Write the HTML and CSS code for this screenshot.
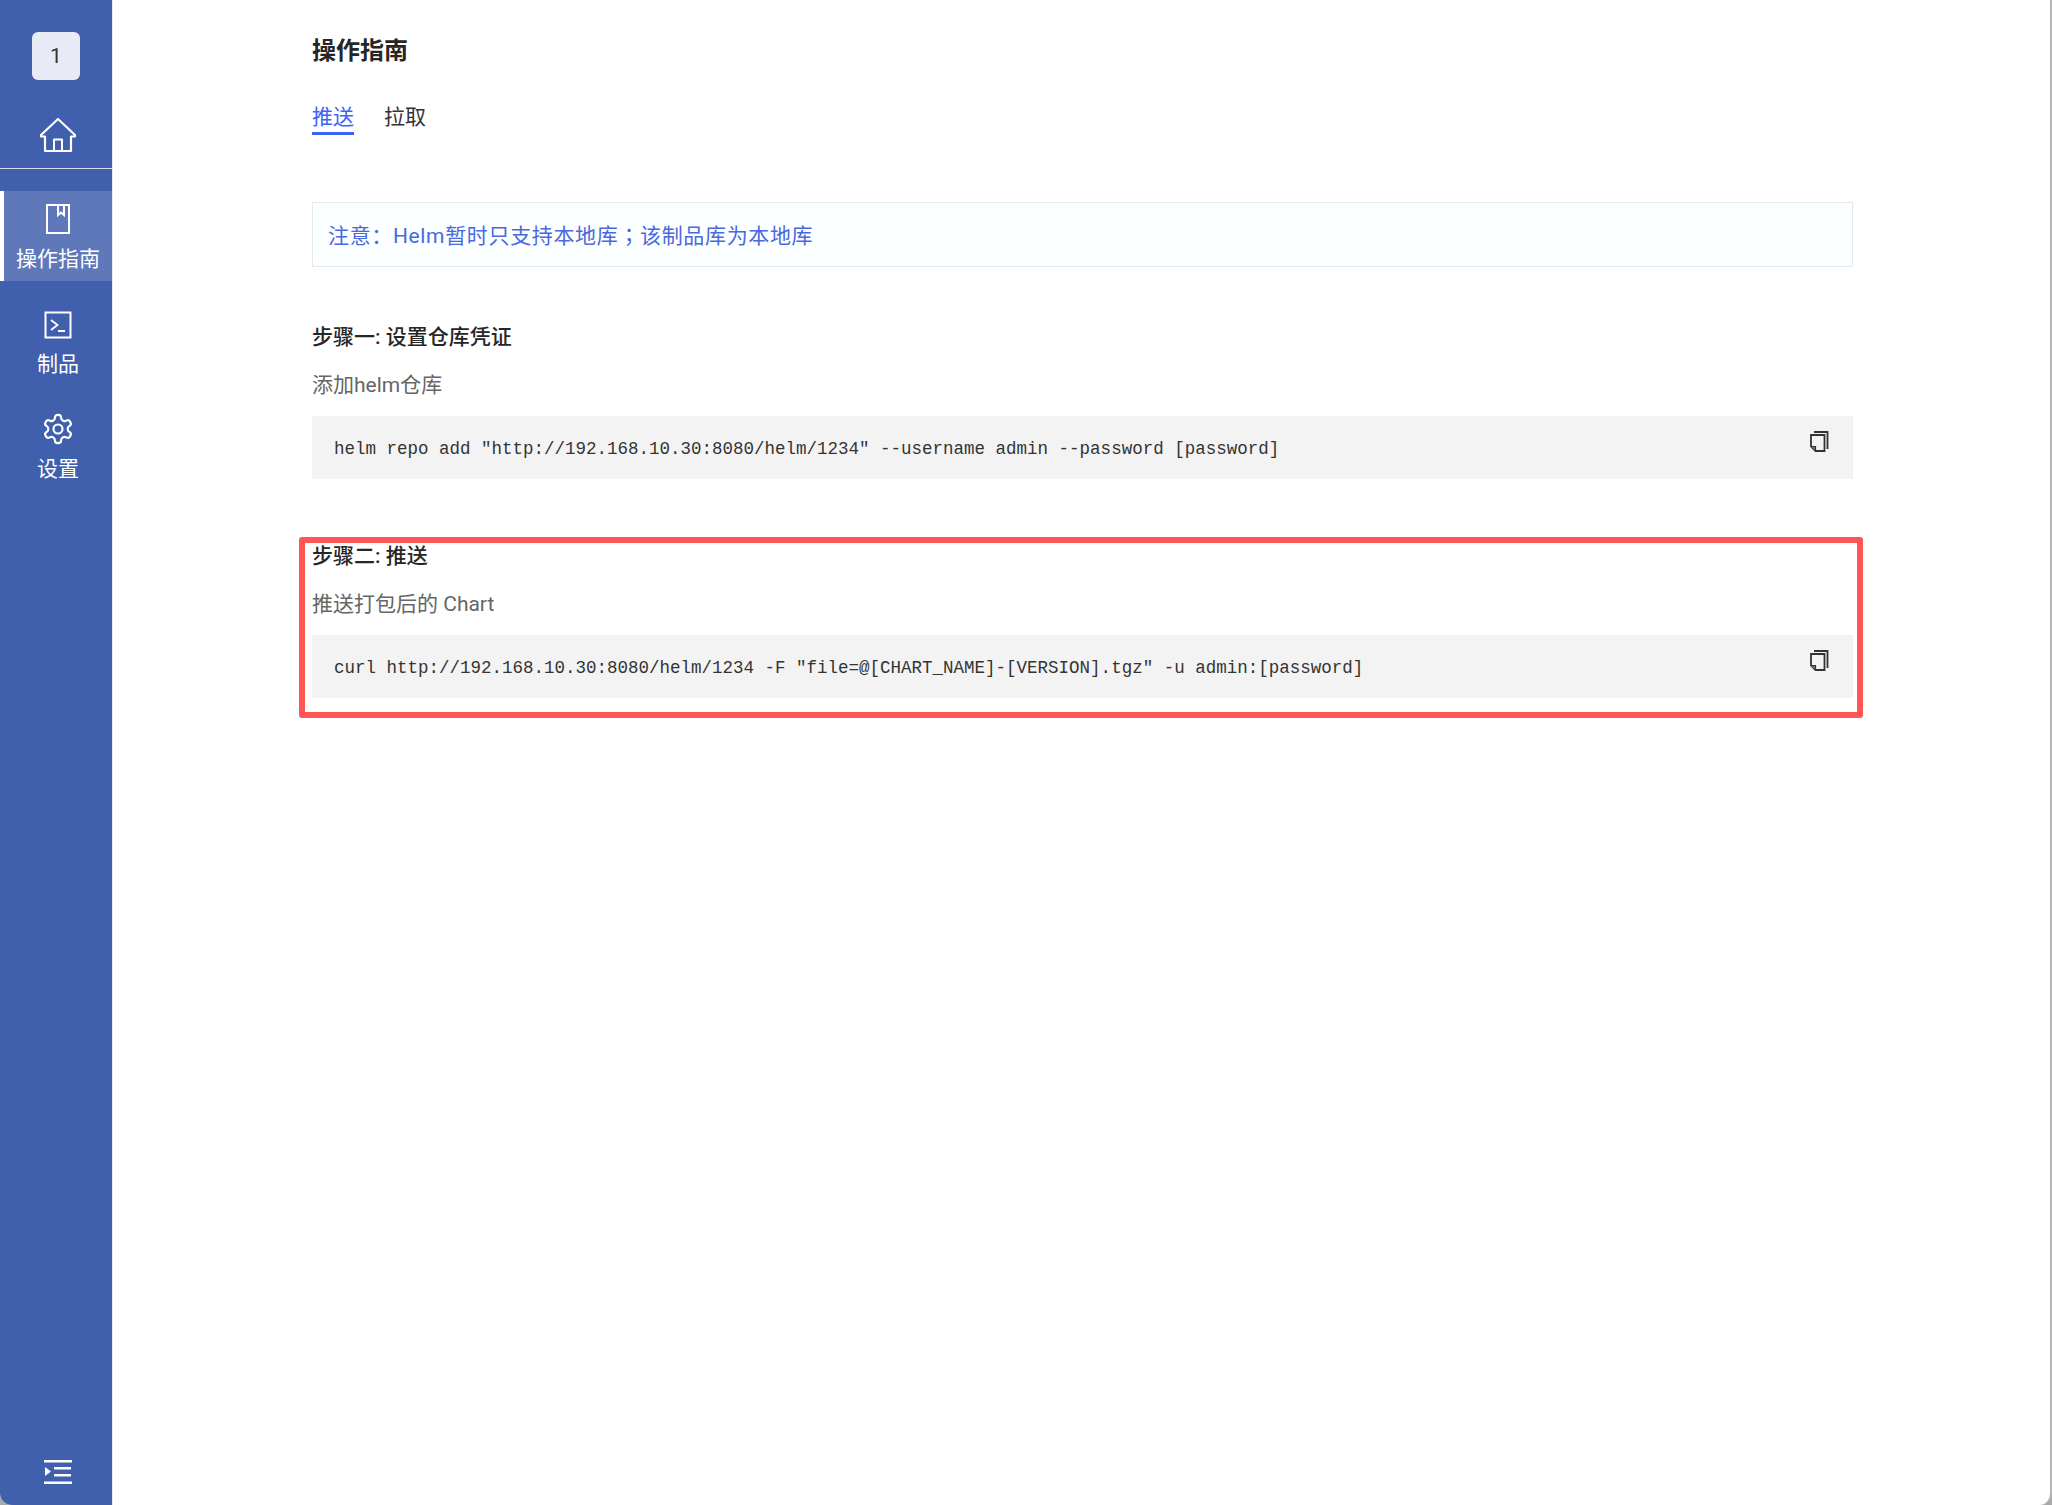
FILE: index.html
```html
<!DOCTYPE html>
<html lang="zh-CN">
<head>
<meta charset="utf-8">
<title>操作指南</title>
<link rel="stylesheet" href="styles.css">
</head>
<body>
<div class="app">
  <aside class="sidebar">
    <div class="logo">1</div>
    <a class="home">
      <svg width="38" height="36" viewBox="0 0 38 36" fill="none" stroke="#fff" stroke-width="2.2" stroke-linejoin="round"><path d="M19 2 2 18v1.5h4V34h26V19.5h4V18Z"/><path d="M15 34V22.5h8V34" stroke-width="2"/></svg>
    </a>
    <div class="divider"></div>
    <nav class="nav">
      <a class="nav-item active">
        <span class="nav-icon"><svg width="26" height="32" viewBox="0 0 26 32" fill="none" stroke="#fff" stroke-width="2"><path d="M2 2h22v28H2Z"/><path d="M13 2v10l3-2.500 3 2.500V2"/></svg></span>
        <span class="nav-label">操作指南</span>
      </a>
      <a class="nav-item">
        <span class="nav-icon nav-icon-low"><svg width="28" height="28" viewBox="0 0 28 28" fill="none" stroke="#fff" stroke-width="2"><path d="M1.500 1.500h25v25h-25Z"/><path d="m7 9 6.500 5L7 19M14 20h7" stroke-width="1.800"/></svg></span>
        <span class="nav-label">制品</span>
      </a>
      <a class="nav-item">
        <span class="nav-icon"><svg width="34" height="34" viewBox="0 0 24 24" fill="none" stroke="#fff" stroke-width="1.500"><path d="M12.220 2h-.44a2 2 0 0 0-2 2v.18a2 2 0 0 1-1 1.730l-.43.25a2 2 0 0 1-2 0l-.15-.08a2 2 0 0 0-2.730.73l-.22.38a2 2 0 0 0 .73 2.730l.15.1a2 2 0 0 1 1 1.720v.51a2 2 0 0 1-1 1.740l-.15.09a2 2 0 0 0-.73 2.730l.22.38a2 2 0 0 0 2.730.73l.15-.08a2 2 0 0 1 2 0l.43.25a2 2 0 0 1 1 1.730V20a2 2 0 0 0 2 2h.44a2 2 0 0 0 2-2v-.18a2 2 0 0 1 1-1.730l.43-.25a2 2 0 0 1 2 0l.15.08a2 2 0 0 0 2.730-.73l.22-.39a2 2 0 0 0-.73-2.730l-.15-.08a2 2 0 0 1-1-1.740v-.5a2 2 0 0 1 1-1.740l.15-.09a2 2 0 0 0 .73-2.730l-.22-.38a2 2 0 0 0-2.730-.73l-.15.08a2 2 0 0 1-2 0l-.43-.25a2 2 0 0 1-1-1.730V4a2 2 0 0 0-2-2z"/><circle cx="12" cy="12" r="3.200"/></svg></span>
        <span class="nav-label">设置</span>
      </a>
    </nav>
    <a class="collapse">
      <svg width="28" height="24" viewBox="0 0 28 24" fill="#fff"><path d="M0 0h28v2.500H0ZM10 7h17v2.500H10ZM10 14h17v2.500H10ZM0 21.500h28V24H0ZM1 7l6 4.500L1 16Z"/></svg>
    </a>
  </aside>

  <main class="main">
    <h1 class="title">操作指南</h1>
    <div class="tabs">
      <a class="tab active">推送</a>
      <a class="tab">拉取</a>
    </div>
    <div class="alert"><span>注意：Helm暂时只支持本地库<span class="punct" lang="zh-TW">；</span>该制品库为本地库</span></div>

    <section class="step">
      <h2 class="step-title">步骤一: 设置仓库凭证</h2>
      <p class="step-desc">添加helm仓库</p>
      <div class="code">
        <code class="code-text">helm repo add "http://192.168.10.30:8080/helm/1234" --username admin --password [password]</code>
        <svg class="copy" width="20" height="21" viewBox="0 0 20 21" fill="none" stroke="#333" stroke-width="1.800"><path d="M4 1h13.500v17"/><path d="M1 4h13.500v16H5.500L1 15.500Z"/><path d="M1 15.500h4.500V20" fill="#777" stroke-width="1.200"/></svg>
      </div>
    </section>

    <section class="step">
      <h2 class="step-title">步骤二: 推送</h2>
      <p class="step-desc">推送打包后的 Chart</p>
      <div class="code">
        <code class="code-text">curl http://192.168.10.30:8080/helm/1234 -F "file=@[CHART_NAME]-[VERSION].tgz" -u admin:[password]</code>
        <svg class="copy" width="20" height="21" viewBox="0 0 20 21" fill="none" stroke="#333" stroke-width="1.800"><path d="M4 1h13.500v17"/><path d="M1 4h13.500v16H5.500L1 15.500Z"/><path d="M1 15.500h4.500V20" fill="#777" stroke-width="1.200"/></svg>
      </div>
      <div class="highlight"></div>
    </section>
  </main>
</div>
</body>
</html>
```
FILE: styles.css
```css
* { box-sizing: border-box; }

html, body {
  margin: 0;
  height: 100%;
  background: #a9a9a9;
}

body {
  font-family: Roboto, "Noto Sans CJK SC", "Noto Sans", sans-serif;
  font-size: 21px;
  overflow: hidden;
}

.app {
  display: flex;
  height: 1505px;
  background: #fff;
  border-right: 2px solid #b5b5b5;
  border-radius: 0 0 12px 12px;
  overflow: hidden;
}

.sidebar {
  width: 113px;
  flex: none;
  display: flex;
  flex-direction: column;
  background: #405fad;
  border-right: 1px solid #e6e8f2;
}

.logo {
  width: 48px;
  height: 48px;
  margin: 32px 0 0 32px;
  display: flex;
  align-items: center;
  justify-content: center;
  background: #e8eaf6;
  border-radius: 6px;
  color: #333;
  font-size: 21px;
}

.home {
  height: 36px;
  margin-top: 37px;
  padding-left: 4px;
  display: flex;
  justify-content: center;
}

.divider {
  height: 1px;
  margin-top: 15px;
  background: #d8dce8;
}

.nav {
  display: flex;
  flex-direction: column;
  gap: 15px;
  margin-top: 22px;
}

.nav-item {
  height: 90px;
  padding-top: 13px;
  display: flex;
  flex-direction: column;
  align-items: center;
  border-left: 4px solid transparent;
  color: #fff;
}

.nav-item.active {
  background: #5f78b9;
  border-left-color: #fff;
}

.nav-icon {
  height: 30px;
  display: flex;
  align-items: center;
  justify-content: center;
}

.nav-icon-low {
  padding-top: 2px;
}

.nav-label {
  margin-top: 11px;
  line-height: 28px;
  white-space: nowrap;
}

.collapse {
  margin-top: auto;
  margin-bottom: 21px;
  padding-left: 4px;
  display: flex;
  justify-content: center;
}

.main {
  flex: 1;
  padding: 35px 0 0 199px;
}

.title {
  margin: 0;
  font-size: 24px;
  line-height: 32px;
  font-weight: 700;
  color: #262626;
}

.tabs {
  display: flex;
  gap: 30px;
  margin-top: 35px;
}

.tab {
  height: 33px;
  line-height: 30px;
  color: #333;
}

.tab.active {
  color: #3d63f5;
  border-bottom: 3px solid #3d63f5;
}

.alert {
  width: 1541px;
  height: 65px;
  margin-top: 67px;
  padding: 0 0 2px 15px;
  display: flex;
  align-items: center;
  background: #fbffff;
  border: 1px solid #e4e9ef;
  color: #4a68dc;
  letter-spacing: 0.650px;
}

.punct {
  font-family: "Noto Sans CJK TC", sans-serif;
}

.step {
  position: relative;
  width: 1541px;
  margin-top: 55px;
}

.step + .step {
  margin-top: 62px;
}

.step-title {
  margin: 0;
  font-size: 21px;
  line-height: 30px;
  font-weight: 500;
  color: #262626;
}

.step-desc {
  margin: 18px 0 0;
  line-height: 30px;
  color: #666;
}

.code {
  height: 63px;
  margin-top: 16px;
  padding: 15px 23px 0 22px;
  display: flex;
  justify-content: space-between;
  align-items: flex-start;
  background: #f3f3f3;
}

.code-text {
  margin-top: 2px;
  font-family: "Liberation Mono", monospace;
  font-size: 17.500px;
  line-height: 32px;
  color: #333;
  white-space: pre;
}

.copy {
  flex: none;
}

.highlight {
  position: absolute;
  left: -13px;
  right: -10px;
  top: -4px;
  bottom: -20px;
  border: 6px solid #ff5555;
  border-radius: 3px;
  pointer-events: none;
}
```
